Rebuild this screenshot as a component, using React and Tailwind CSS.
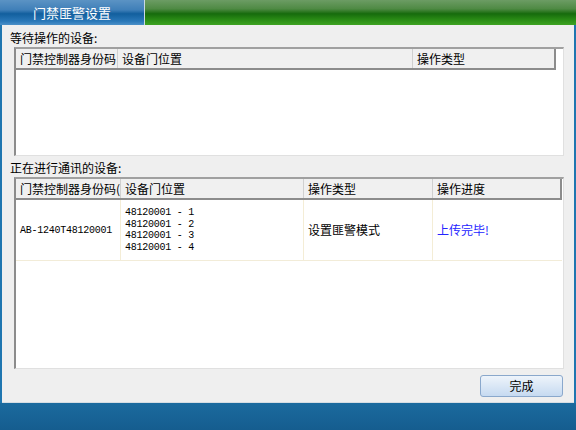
const cjk = { fontFamily: '"Noto Sans CJK SC", "Noto Sans CJK JP", sans-serif' };
const mono = { fontFamily: '"Liberation Mono", "DejaVu Sans Mono", monospace' };

function HeaderCell({ w, children, last }) {
  return (
    <div
      className={`flex h-full shrink-0 items-center overflow-hidden whitespace-nowrap pl-[4px] text-[12px] leading-none text-black ${
        last ? "border-r-2 border-[#8c8c8c]" : "border-r border-[#d0d0d0]"
      }`}
      style={{ width: w }}
    >
      {children}
    </div>
  );
}

export default function App() {
  return (
    <div className="flex h-[430px] w-[576px] flex-col overflow-hidden bg-[#1a6699]" style={cjk}>
      {/* title strip */}
      <div className="flex h-[25px] shrink-0">
        <div className="flex w-[144px] items-center justify-center bg-[linear-gradient(to_bottom,#5b93c4_0%,#3f7fb8_40%,#125f9e_55%,#2a78b8_85%,#4b90c8_100%)] text-[13px] text-white">
          门禁匪警设置
        </div>
        <div className="w-[1px] bg-[#c9d9e4]" />
        <div className="flex-1 bg-[linear-gradient(to_bottom,#6c9c64_0%,#4f8a44_35%,#166b0c_55%,#2b8d16_80%,#3ea322_100%)]" />
      </div>

      {/* body */}
      <div className="flex flex-1">
        <div className="w-[2px] bg-[#1f76b0]" />
        <div className="flex flex-1 flex-col border-b border-[#d6dde3] bg-[#efefef] pl-[12px] pr-[10px]">
          <div className="mt-[5px] text-[12px] leading-[15px] text-black" style={{ marginLeft: -4 }}>
            等待操作的设备:
          </div>
          {/* waiting table */}
          <div className="mt-[2px] flex h-[109px] flex-col border-l-2 border-t-2 border-b border-r border-l-[#8c8c8c] border-t-[#a0a0a0] border-b-[#e0e0e0] border-r-[#e0e0e0] bg-white">
            <div className="flex h-[21px] shrink-0">
              <div className="flex h-full border-b-2 border-[#8c8c8c] bg-[#f0f0f0]">
                <HeaderCell w={102}>门禁控制器身份码</HeaderCell>
                <HeaderCell w={295}>设备门位置</HeaderCell>
                <HeaderCell w={143} last>
                  操作类型
                </HeaderCell>
              </div>
            </div>
            <div className="flex-1" />
          </div>

          <div className="mt-[4px] text-[12px] leading-[15px] text-black" style={{ marginLeft: -4 }}>
            正在进行通讯的设备:
          </div>
          {/* running table */}
          <div className="mt-[2px] flex h-[192px] flex-col border-l-2 border-t-2 border-b border-r border-l-[#8c8c8c] border-t-[#a0a0a0] border-b-[#e0e0e0] border-r-[#e0e0e0] bg-white">
            <div className="flex h-[21px] shrink-0">
              <div className="flex h-full border-b-2 border-[#8c8c8c] bg-[#f0f0f0]">
                <HeaderCell w={105}>门禁控制器身份码(</HeaderCell>
                <HeaderCell w={183}>设备门位置</HeaderCell>
                <HeaderCell w={129}>操作类型</HeaderCell>
                <HeaderCell w={129} last>
                  操作进度
                </HeaderCell>
              </div>
            </div>
            <div className="flex h-[61px] shrink-0">
              <div className="flex border-b border-[#f2ecd8]">
                <div className="flex w-[105px] items-center border-r border-[#f4edd6] pl-[4px] text-[10px] tracking-[-0.25px] text-black" style={mono}>
                  AB-1240T48120001
                </div>
                <div className="flex w-[183px] flex-col justify-center border-r border-[#f4edd6] pl-[4px] text-[10px] leading-[11.5px] tracking-[-0.25px] text-black" style={mono}>
                  <div>48120001 - 1</div>
                  <div>48120001 - 2</div>
                  <div>48120001 - 3</div>
                  <div>48120001 - 4</div>
                </div>
                <div className="flex w-[129px] items-center border-r border-[#f4edd6] pl-[4px] text-[12px] text-black">
                  设置匪警模式
                </div>
                <div className="flex w-[129px] items-center pl-[4px] text-[12px] text-[#2424ff]">
                  上传完毕!
                </div>
              </div>
            </div>
            <div className="flex-1" />
          </div>

          <div className="mt-[6px] flex justify-end pr-[1px]">
            <button className="flex h-[22px] w-[83px] items-center justify-center rounded-[3px] border border-[#8aa8cc] bg-[linear-gradient(to_bottom,#eef4fb_0%,#dae7f6_50%,#c6daf1_100%)] text-[12px] text-black">
              完成
            </button>
          </div>
        </div>
        <div className="w-[2px] bg-[#1f76b0]" />
      </div>

      {/* bottom strip */}
      <div className="h-[27px] shrink-0 bg-[linear-gradient(to_bottom,#1b6a9e_0%,#155d8f_100%)]" />
    </div>
  );
}
